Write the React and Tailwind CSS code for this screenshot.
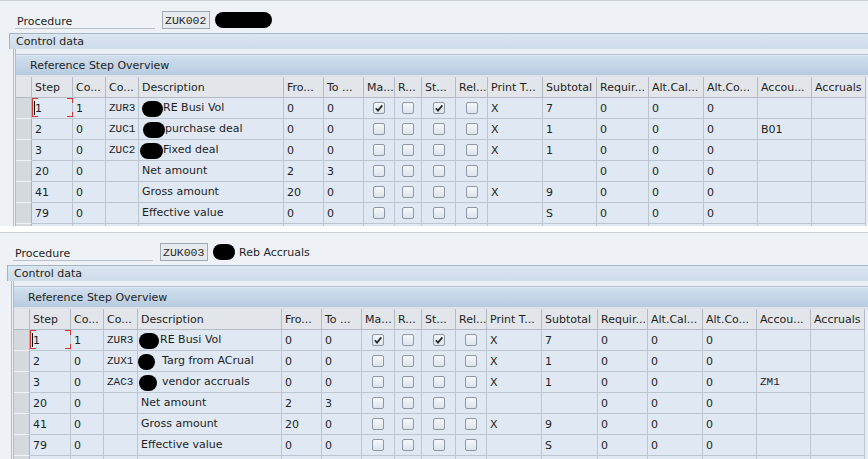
import React from "react";

const SANS = "font-['DejaVu_Sans',Verdana,sans-serif]";
const MONO = "font-['Liberation_Mono','Courier_New',monospace]";

const headers = ["", "Step", "Co...", "Co...", "Description", "Fro...", "To ...", "Ma...", "R...", "St...", "Rel...", "Print T...", "Subtotal", "Requir...", "Alt.Cal...", "Alt.Co...", "Accou...", "Accruals"];

// column widths, one list per panel (the second one is drawn a bit differently)
const widthsA = ["w-[16px]", "w-[41px]", "w-[33px]", "w-[33px]", "w-[145px]", "w-[40px]", "w-[40px]", "w-[31px]", "w-[27px]", "w-[34px]", "w-[32px]", "w-[55px]", "w-[54px]", "w-[52px]", "w-[55px]", "w-[54px]", "w-[54px]", "w-[54px]"];
const widthsB = ["w-[16px]", "w-[41px]", "w-[33px]", "w-[34px]", "w-[144px]", "w-[40px]", "w-[40px]", "w-[33px]", "w-[27px]", "w-[34px]", "w-[31px]", "w-[55px]", "w-[56px]", "w-[50px]", "w-[55px]", "w-[54px]", "w-[54px]", "w-[54px]"];

const rowsA = [
  { step: "1", co: "1", code: "ZUR3", blob: "ml-[3px] w-[21px]", gap: "", desc: "RE Busi Vol", fro: "0", to: "0", ma: true, st: true, print: "X", sub: "7", acc: "" },
  { step: "2", co: "0", code: "ZUC1", blob: "ml-[4px] w-[22px]", gap: "", desc: "purchase deal", fro: "0", to: "0", print: "X", sub: "1", acc: "B01" },
  { step: "3", co: "0", code: "ZUC2", blob: "ml-[1px] w-[23px]", gap: "", desc: "Fixed deal", fro: "0", to: "0", print: "X", sub: "1", acc: "" },
  { step: "20", co: "0", code: "", desc: "Net amount", fro: "2", to: "3", print: "", sub: "", acc: "" },
  { step: "41", co: "0", code: "", desc: "Gross amount", fro: "20", to: "0", print: "X", sub: "9", acc: "" },
  { step: "79", co: "0", code: "", desc: "Effective value", fro: "0", to: "0", print: "", sub: "S", acc: "" },
];

const rowsB = [
  { step: "1", co: "1", code: "ZUR3", blob: "ml-[1px] w-[20px]", gap: "ml-[1px]", desc: "RE Busi Vol", fro: "0", to: "0", ma: true, st: true, print: "X", sub: "7", acc: "" },
  { step: "2", co: "0", code: "ZUX1", blob: "ml-[0px] w-[17px]", gap: "ml-[7px]", desc: "Targ from ACrual", fro: "0", to: "0", print: "X", sub: "1", acc: "" },
  { step: "3", co: "0", code: "ZAC3", blob: "ml-[1px] w-[18px]", gap: "ml-[5px]", desc: "vendor accruals", fro: "0", to: "0", print: "X", sub: "1", acc: "ZM1" },
  { step: "20", co: "0", code: "", desc: "Net amount", fro: "2", to: "3", print: "", sub: "", acc: "" },
  { step: "41", co: "0", code: "", desc: "Gross amount", fro: "20", to: "0", print: "X", sub: "9", acc: "" },
  { step: "79", co: "0", code: "", desc: "Effective value", fro: "0", to: "0", print: "", sub: "S", acc: "" },
];

function Check({ on }) {
  return (
    <span className="w-[12px] h-[12px] rounded-[2px] border border-[#8d98a4] bg-linear-to-b from-[#f5f8fb] to-[#dce4ec] flex items-center justify-center">
      {on && (
        <svg width="10" height="10" viewBox="0 0 10 10">
          <path d="M1.8 5.2 L4 7.6 L8.3 2.4" fill="none" stroke="#2a2a2a" strokeWidth="1.7" />
        </svg>
      )}
    </span>
  );
}

function Focus() {
  // red cell-focus corners + text cursor
  return (
    <>
      <span className="absolute left-0 top-0 bottom-[1px] w-[1px] bg-[#d2352d]" />
      <span className="absolute left-0 top-0 w-[6px] h-[1px] bg-[#d2352d]" />
      <span className="absolute left-0 bottom-[1px] w-[6px] h-[1px] bg-[#d2352d]" />
      <span className="absolute right-[-1px] top-0 w-[6px] h-[1px] bg-[#d2352d]" />
      <span className="absolute right-[-1px] top-0 w-[1px] h-[5px] bg-[#d2352d]" />
      <span className="absolute right-[-1px] bottom-[1px] w-[6px] h-[1px] bg-[#d2352d]" />
      <span className="absolute right-[-1px] bottom-[1px] w-[1px] h-[5px] bg-[#d2352d]" />
      <span className="absolute left-[2px] top-[3px] w-[1px] h-[14px] bg-black" />
    </>
  );
}

function Row({ r, widths, focus, accMono }) {
  const cell = "shrink-0 h-full border-r border-b border-[#bcc6d1] bg-[#e0e9f3]";
  const txt = `${cell} pl-[3px] leading-[21px] whitespace-nowrap overflow-hidden`;
  const box = `${cell} flex items-center justify-center`;
  const sel = "shrink-0 h-full border-r border-[#a9b2bb] border-b border-b-[#f0f3f6] bg-[#d4d9de]";

  if (!r) {
    return (
      <div className="flex h-[21px]">
        <div className={`${widths[0]} ${sel}`} />
        {widths.slice(1).map((w, i) => (
          <div key={i} className={`${w} ${cell}`} />
        ))}
      </div>
    );
  }

  return (
    <div className="flex h-[21px]">
      <div className={`${widths[0]} ${sel}`} />
      <div className={`${widths[1]} ${txt} relative overflow-visible`}>
        {focus && <Focus />}
        {r.step}
      </div>
      <div className={`${widths[2]} ${txt}`}>{r.co}</div>
      <div className={`${widths[3]} ${txt} ${MONO} text-[11px]`}>{r.code}</div>
      <div className={`${widths[4]} ${cell} flex items-center pt-[1px] whitespace-nowrap overflow-hidden`}>
        {r.blob ? (
          <>
            <span className={`${r.blob} h-[16px] shrink-0 rounded-[8px] bg-black`} />
            <span className={r.gap}>{r.desc}</span>
          </>
        ) : (
          <span className="pl-[3px]">{r.desc}</span>
        )}
      </div>
      <div className={`${widths[5]} ${txt}`}>{r.fro}</div>
      <div className={`${widths[6]} ${txt}`}>{r.to}</div>
      <div className={`${widths[7]} ${box}`}><Check on={r.ma} /></div>
      <div className={`${widths[8]} ${box}`}><Check /></div>
      <div className={`${widths[9]} ${box}`}><Check on={r.st} /></div>
      <div className={`${widths[10]} ${box}`}><Check /></div>
      <div className={`${widths[11]} ${txt}`}>{r.print}</div>
      <div className={`${widths[12]} ${txt}`}>{r.sub}</div>
      <div className={`${widths[13]} ${txt}`}>0</div>
      <div className={`${widths[14]} ${txt}`}>0</div>
      <div className={`${widths[15]} ${txt}`}>0</div>
      <div className={`${widths[16]} ${txt} ${accMono ? `${MONO} text-[11px]` : ""}`}>{r.acc}</div>
      <div className={`${widths[17]} ${txt}`}></div>
    </div>
  );
}

function Panel({ hClass, padClass, code, blobClass, extra, rows, widths, accMono }) {
  return (
    <div className={`${hClass} ${padClass} overflow-hidden bg-[#eef2f6] border-t border-[#c9d1d9] ${SANS} text-[11px] text-[#1e1e1e]`}>
      <div className="h-[32px] flex items-start">
        <div className="ml-[13px] mt-[10px] w-[140px] h-[18px] border-b border-[#b6c1cc] pl-[2px] leading-[21px]">Procedure</div>
        <div className={`ml-[7px] mt-[10px] w-[48px] h-[18px] border border-[#a2acb7] bg-[#e8ebee] pl-[2px] leading-[17px] ${MONO} text-[11.5px] text-[#2a2a2a]`}>
          {code}
        </div>
        <div className={`ml-[5px] mt-[11px] h-[16px] bg-black rounded-[8px] ${blobClass}`} />
        {extra && <div className="ml-[4px] mt-[10px] leading-[20px]">{extra}</div>}
      </div>

      <div className="ml-[7px] h-[16px] border-t border-l border-[#a3b6c9] bg-linear-to-b from-[#dbe6f1] to-[#cddbe9] pl-[6px] leading-[15px]">
        Control data
      </div>

      <div className="ml-[11px] h-full border-l border-[#aebdcc]">
        <div className="ml-[1px] h-full border-l border-[#aebdcc] bg-[#e7edf3]">
          <div className="h-[6px] border-b border-[#b3c3d3] bg-[#e9eff5]" />
          <div className="h-[20px] border-t border-[#dfe8f1] bg-linear-to-b from-[#d0dfed] to-[#b8cbdf] pl-[14px] leading-[19px]">
            Reference Step Overview
          </div>
          <div className="h-[2px] bg-[#dde4eb]" />

          <div className="flex h-[21px]">
            {headers.map((h, i) => (
              <div
                key={i}
                className={`${widths[i]} shrink-0 h-full border-r border-b border-[#b2bac3] bg-[#e2e6ea] pl-[3px] leading-[21px] whitespace-nowrap overflow-hidden`}
              >
                {h}
              </div>
            ))}
          </div>

          {rows.map((r, i) => (
            <Row key={i} r={r} widths={widths} focus={i === 0} accMono={accMono} />
          ))}
          <Row widths={widths} />
        </div>
      </div>
    </div>
  );
}

export default function App() {
  return (
    <div className="w-[868px] h-[459px] bg-white overflow-hidden">
      <Panel
        hClass="h-[226px]"
        padClass="pl-[2px]"
        code="ZUK002"
        blobClass="w-[57px]"
        rows={rowsA}
        widths={widthsA}
      />
      <div className="h-[6px] bg-white" />
      <Panel
        hClass="h-[227px]"
        padClass="pl-0"
        code="ZUK003"
        blobClass="w-[22px]"
        extra="Reb Accruals"
        rows={rowsB}
        widths={widthsB}
        accMono
      />
    </div>
  );
}
